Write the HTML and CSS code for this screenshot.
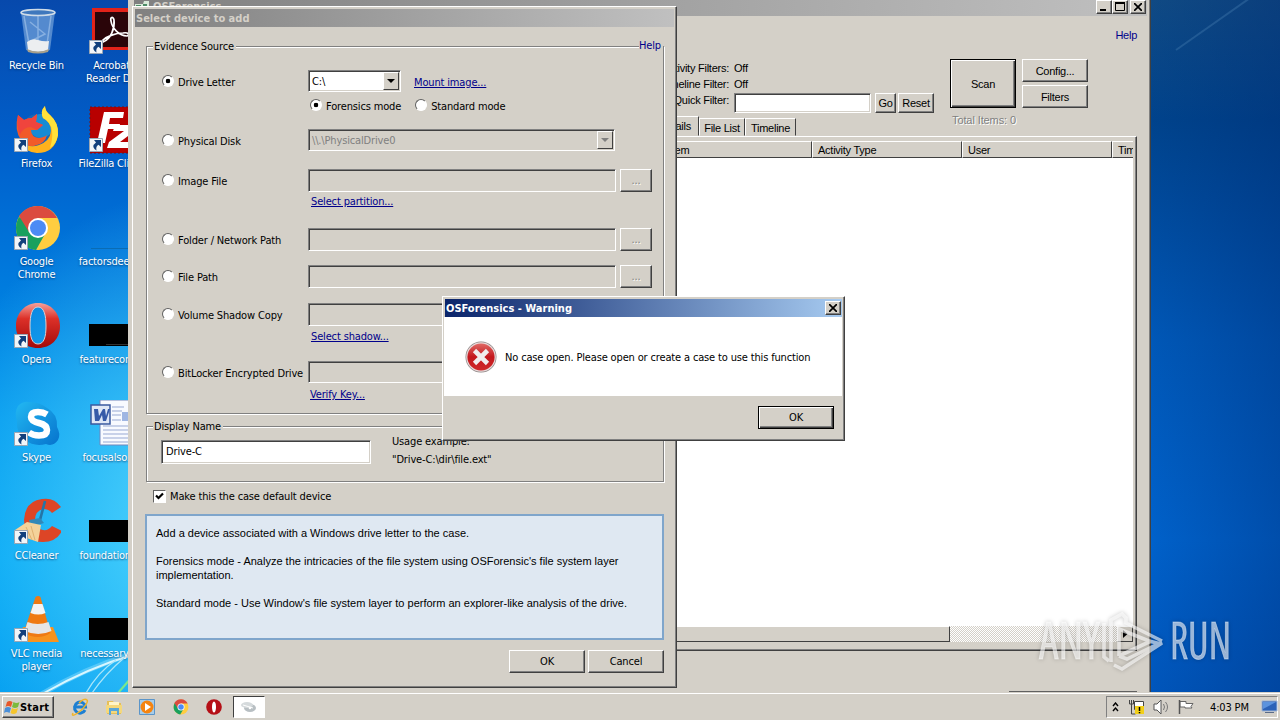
FILE: index.html
```html
<!DOCTYPE html>
<html lang="en">
<head>
    <meta charset="UTF-8">
    <title>OSForensics</title>
    <link rel="stylesheet" href="styles.css">
</head>
<body>
    <div class="desktop">
        <!-- Wallpaper light rays -->
        <svg class="rays" width="1280" height="720" viewBox="0 0 1280 720" fill="none">
            <defs>
                <g id="link">
                    <path d="M.5.5h13v13H.5z" fill="#f2f5f8" stroke="#9aa6b4"/>
                    <path d="M5 2h7v7L9.500 6.700Q6.500 8.500 7.500 12.500 1.500 8.500 7 4.500z" fill="#12407c"/>
                </g>
            </defs>
            <path d="M40 695 Q85 668 132 654" stroke="#9fe6ff" stroke-width="5" opacity=".4"/>
            <path d="M44 693 Q88 668 132 655" stroke="#d8f7ff" stroke-width="2"/>
            <path d="M86 693 Q98 672 116 660M92 693Q106 673 124 658" stroke="#a9e6fa" stroke-width="1.3"/>
            <path d="M118 693 L132 677" stroke="#7be88a" stroke-width="2"/>
            <path d="M1176 50 L1250 -2" stroke="#4d83b5" stroke-width="2" opacity=".35"/>
        </svg>

        <!-- Desktop icons -->
        <div class="icons">
            <div class="icon">
                <svg width="48" height="48" viewBox="0 0 48 48">
                    <path d="M8 4h34l-5 38q-12 5-24 0z" fill="#6f9fd8" opacity=".75"/>
                    <path d="M11 8l5 28M38 8l-4 28M25 8v26M17 14l15 12-16 8" stroke="#a9c8ec" stroke-width="1.5" fill="none" opacity=".6"/>
                    <path d="M14 34q5-4 11-2t11 1l-1 9q-10 4-20 0z" fill="#eceef0"/>
                    <path d="M14 41q11 5 22 0l-1 3q-10 3-20 0z" fill="#a7a08c"/>
                    <ellipse cx="25" cy="4.5" rx="17" ry="3" fill="#3f78bd" stroke="#cfdce8" stroke-width="1.6"/>
                </svg>
                <span>Recycle Bin</span>
            </div>
            <div class="icon">
                <svg width="48" height="48" viewBox="0 0 48 48">
                    <path d="M4 0h44v42H4z" fill="#e2231a"/>
                    <path d="M7 4h41v35H7z" fill="#2a0509"/>
                    <path d="M15 34c8-3 12-14 11-22-1-4-4-3-3 1 1 7 8 15 16 15 4-1 1-4-4-3-8 0-17 4-20 7q-2 4 0 2z" fill="none" stroke="#fff" stroke-width="1.7"/>
                </svg>
                <span>Acrobat<br>Reader DC</span>
                <svg class="shortcut"><use href="#link"/></svg>
            </div>
            <div class="icon">
                <svg width="48" height="48" viewBox="0 0 48 48">
                    <circle cx="25" cy="25" r="17" fill="#1667b8"/>
                    <circle cx="28" cy="20" r="12" fill="#168bd4"/>
                    <path d="M5 9l6 5q4-2 8-2l5-4-1 8 7 3-6 5h-6q0 7 8 8 6-1 8-3-2 8-10 10Q14 43 8 34 1 24 5 9z" fill="#f15a29"/>
                    <path d="M5 9l6 5q4-2 8-2l5-4-1 8 7 3-6 5-6-3q-8 0-11 8Q3 18 5 9z" fill="#f0443d"/>
                    <path d="M32 0q0 5 5 9 9 8 8 20-3 18-21 18Q11 46 7 35q9 8 19 4 11-4 12-14 0-9-8-13-3-7 2-12z" fill="#ffb21c"/>
                    <path d="M32 0q0 5 5 9 9 8 8 20-2 10-8 13 3-10 2-17-1-9-9-13-3-7 2-12z" fill="#ffe13a"/>
                </svg>
                <span>Firefox</span>
                <svg class="shortcut"><use href="#link"/></svg>
            </div>
            <div class="icon">
                <svg width="48" height="48" viewBox="0 0 48 48">
                    <path d="M2 1h46v46H2z" fill="#b80000" stroke="#7c1010" stroke-dasharray="2 2"/>
                    <path d="M16 6h20l-1 6H22l-1 6h11l-1 5H20l-3 14H9z" fill="#fff"/>
                    <path d="M27 19h21v5L32 36h16v6H19l2-6 15-11H25z" fill="#fff"/>
                </svg>
                <span>FileZilla Client</span>
                <svg class="shortcut"><use href="#link"/></svg>
            </div>
            <div class="icon">
                <svg width="48" height="48" viewBox="0 0 48 48">
                    <circle cx="25" cy="24" r="22" fill="#ffcd40"/>
                    <path d="M25 24L6 13A22 22 0 0 0 23 46l9-16z" fill="#18a05e"/>
                    <path d="M6 12A22 22 0 0 1 44 14H25l-9 14z" fill="#db4b3f"/>
                    <circle cx="25" cy="24" r="10" fill="#fff"/>
                    <circle cx="25" cy="24" r="8" fill="#4c8bf5"/>
                </svg>
                <span>Google<br>Chrome</span>
                <svg class="shortcut"><use href="#link"/></svg>
            </div>
            <div class="icon">
                <svg width="48" height="48" viewBox="0 0 48 48"><path d="M3 44.500h45" stroke="#0a6cb4"/></svg>
                <span>factorsdeep...</span>
            </div>
            <div class="icon">
                <svg width="48" height="48" viewBox="0 0 48 48">
                    <defs><linearGradient id="op" x1="0" y1="0" x2="0" y2="1"><stop offset="0" stop-color="#f4a09a"/><stop offset=".35" stop-color="#dc3028"/><stop offset="1" stop-color="#a30a0a"/></linearGradient></defs>
                    <path fill="url(#op)" fill-rule="evenodd" d="M25 1C38 1 47 11 47 24S38 46 25 46 3 37 3 24 12 1 25 1zM25 5C19 5 17 13 17 24s2 18 8 18 8-7 8-18S31 5 25 5z"/>
                    <path d="M25 5C19 5 17 13 17 24s2 18 8 18 8-7 8-18S31 5 25 5z" fill="none" stroke="#d9d0d4"/>
                </svg>
                <span>Opera</span>
                <svg class="shortcut"><use href="#link"/></svg>
            </div>
            <div class="icon">
                <svg width="48" height="48" viewBox="0 0 48 48"><path d="M1 22h47v22H1z"/><path d="M18 42.500h30" stroke="#333"/></svg>
                <span>featurecont...</span>
            </div>
            <div class="icon">
                <svg width="48" height="48" viewBox="0 0 48 48">
                    <defs><linearGradient id="sk" x1="0" y1="0" x2="1" y2="1"><stop offset="0" stop-color="#22b8f2"/><stop offset="1" stop-color="#0673cd"/></linearGradient></defs>
                    <path d="M16 2Q27 2 34 8 45 14 44 27 48 34 45 40 40 47 33 44 21 47 12 40 3 33 4 21 1 12 5 6 10 1 16 2z" fill="url(#sk)"/>
                    <path d="M34 14.500q-4-2.500-9-2.500-7 0-7 5 0 4 8 6t8 7q0 5.500-8 5.500-6 0-10-3" stroke="#fff" stroke-width="6.500" fill="none"/>
                </svg>
                <span>Skype</span>
                <svg class="shortcut"><use href="#link"/></svg>
            </div>
            <div class="icon">
                <svg width="48" height="48" viewBox="0 0 48 48">
                    <path d="M12 0h28l8 8v37H12z" fill="#f8faff" stroke="#7187bd"/>
                    <path d="M24 7h12M24 11h10M24 15h9M24 20h9M15 26h33M15 30h33M15 34h33M15 38h33M15 42h33" stroke="#98a9d3"/>
                    <path d="M34 12h14v9H34z" fill="#9fb6e3"/>
                    <path d="M3 5h19v19H3z" fill="#dfe7f6" stroke="#3a5aa0" stroke-width="1.5"/>
                    <path d="M6 9h4l1 7 4-7h2l1 7 2-7h2l-4 12h-3l-1-6-3 6H7z" fill="#365aa8"/>
                </svg>
                <span>focusalso.rtf</span>
            </div>
            <div class="icon">
                <svg width="48" height="48" viewBox="0 0 48 48">
                    <path d="M48 9Q41-1 29 1 12 3 11 22q1 22 19 22 13 0 19-11l-10-5q-4 5-9 4-8-1-8-10t8-11q6 0 9 4z" fill="#dd4526"/>
                    <path d="M32 3L27 22" stroke="#2475a6" stroke-width="2.600"/>
                    <path d="M16 22l11-2 4 5-13 4z" fill="#3288b8"/>
                    <path d="M14 24l14 3-3 17-17-6-6-6z" fill="#f4d29a"/>
                    <path d="M13 29l6 13M18 28l4 14" stroke="#e0b070"/>
                </svg>
                <span>CCleaner</span>
                <svg class="shortcut"><use href="#link"/></svg>
            </div>
            <div class="icon">
                <svg width="48" height="48" viewBox="0 0 48 48"><path d="M1 22h47v22H1z"/></svg>
                <span>foundationt...</span>
            </div>
            <div class="icon">
                <svg width="48" height="48" viewBox="0 0 48 48">
                    <path d="M10 31h30l6 15H4z" fill="#f7931e"/>
                    <path d="M22.500 1q2.500-2 5 0l10 36q-12 8-27 0z" fill="#ef7a12"/>
                    <path d="M20.500 8h9l3 9q-7 3-15 0z" fill="#f4f4f4"/>
                    <path d="M14.500 26q10 4 21 0l3 9q-13 6-27 0z" fill="#e6e6e6"/>
                </svg>
                <span>VLC media<br>player</span>
                <svg class="shortcut"><use href="#link"/></svg>
            </div>
            <div class="icon">
                <svg width="48" height="48" viewBox="0 0 48 48"><path d="M1 22h47v22H1z"/></svg>
                <span>necessaryc...</span>
            </div>
        </div>

        <!-- Main window -->
        <div class="window main-window">
            <div class="titlebar main-title">
                <svg width="15" height="12" viewBox="0 0 15 12"><path d="M0 3h8l1-3h5v9H0z" fill="#d9ead9"/><path d="M1 5h5M8 4h4" stroke="#4d8c66" stroke-width="2"/></svg>
                <span class="title-text">OSForensics</span>
                <div class="win-buttons">
                    <button class="win-btn"><svg width="10" height="9"><path d="M1 7h6v2H1z"/></svg></button>
                    <button class="win-btn"><svg width="10" height="9"><path d="M.5 1h9v7.500h-9z" fill="none" stroke="#000"/><path d="M0 0h10v2H0z"/></svg></button>
                    <button class="win-btn close"><svg width="8" height="8"><path d="M0 0l8 8M8 0L0 8" stroke="#000" stroke-width="1.700"/></svg></button>
                </div>
            </div>
            <div class="main-body">
                <a class="main-help">Help</a>
                <div class="toolbar">
                    <div class="filters">
                        <span class="name">Activity Filters:</span><span>Off</span>
                        <span class="name">Timeline Filter:</span><span>Off</span>
                        <span class="name">Quick Filter:</span>
                        <div class="quick">
                            <div class="field quick-field"></div>
                            <button class="btn go">Go</button>
                            <button class="btn reset">Reset</button>
                        </div>
                    </div>
                    <div class="scan-box">
                        <button class="btn default scan">Scan</button>
                        <span class="total">Total Items: 0</span>
                    </div>
                    <div class="side-buttons">
                        <button class="btn">Config...</button>
                        <button class="btn">Filters</button>
                    </div>
                </div>
                <div class="tabs">
                    <div class="tab active">Details</div>
                    <div class="tab">File List</div>
                    <div class="tab">Timeline</div>
                </div>
                <div class="tab-panel">
                    <div class="list">
                        <div class="list-head">
                            <span>Item</span><span>Activity Type</span><span>User</span><span>Time</span>
                        </div>
                        <div class="list-body"></div>
                        <div class="scrollbar">
                            <div class="thumb"></div>
                            <div class="arrow"><svg width="5" height="8"><path d="M0 0l4.500 4L0 8z"/></svg></div>
                        </div>
                    </div>
                </div>
                <div class="main-foot"></div>
            </div>
        </div>

        <!-- Select device dialog -->
        <div class="window device">
            <div class="titlebar">Select device to add</div>
            <a class="device-help">Help</a>
            <fieldset class="evidence">
                <legend>Evidence Source</legend>
                <div class="sources">
                    <label><i class="radio on"></i>Drive Letter</label>
                    <div class="drive">
                        <div class="field combo drive-combo">C:\<i class="drop"></i></div>
                        <a>Mount image...</a>
                    </div>
                    <div class="modes">
                        <label><i class="radio on"></i>Forensics mode</label>
                        <label><i class="radio"></i>Standard mode</label>
                    </div>
                    <label><i class="radio"></i>Physical Disk</label>
                    <div class="field combo off">\\.\PhysicalDrive0<i class="drop"></i></div>
                    <label class="row-image"><i class="radio"></i>Image File</label>
                    <div class="field off tall"></div>
                    <button class="btn browse">...</button>
                    <a class="sub">Select partition...</a>
                    <label><i class="radio"></i>Folder / Network Path</label>
                    <div class="field off tall"></div>
                    <button class="btn browse">...</button>
                    <label><i class="radio"></i>File Path</label>
                    <div class="field off tall"></div>
                    <button class="btn browse">...</button>
                    <label><i class="radio"></i>Volume Shadow Copy</label>
                    <div class="field off tall"></div>
                    <a class="sub">Select shadow...</a>
                    <label><i class="radio"></i>BitLocker Encrypted Drive</label>
                    <div class="field off"></div>
                    <a class="sub verify">Verify Key...</a>
                </div>
            </fieldset>
            <fieldset class="display">
                <legend>Display Name</legend>
                <div class="display-row">
                    <div class="field display-field">Drive-C</div>
                    <p>Usage example:<br>"Drive-C:\dir\file.ext"</p>
                </div>
            </fieldset>
            <label class="default-device">
                <i class="check"><svg width="9" height="9"><path d="M1 3.500l2.500 2.500L8 1.500" fill="none" stroke="#000" stroke-width="2.200"/></svg></i>
                Make this the case default device
            </label>
            <div class="info">
                <p>Add a device associated with a Windows drive letter to the case.</p>
                <p>Forensics mode - Analyze the intricacies of the file system using OSForensic's file system layer<br>implementation.</p>
                <p>Standard mode - Use Window's file system layer to perform an explorer-like analysis of the drive.</p>
            </div>
            <div class="device-buttons">
                <button class="btn">OK</button>
                <button class="btn">Cancel</button>
            </div>
        </div>

        <!-- Warning message -->
        <div class="window warning">
            <div class="titlebar blue">
                <span>OSForensics - Warning</span>
                <button class="win-btn"><svg width="8" height="8"><path d="M0 0l8 8M8 0L0 8" stroke="#000" stroke-width="1.700"/></svg></button>
            </div>
            <div class="warning-body">
                <svg width="32" height="32" viewBox="0 0 32 32">
                    <defs><linearGradient id="err" x1="0" y1="0" x2="0" y2="1"><stop offset="0" stop-color="#e06a66"/><stop offset=".5" stop-color="#c3161c"/><stop offset="1" stop-color="#cf2a2a"/></linearGradient></defs>
                    <circle cx="16" cy="16" r="15.500" fill="#8d8585"/>
                    <circle cx="16" cy="16" r="14.800" fill="#e9dada"/>
                    <circle cx="16" cy="16" r="13.600" fill="url(#err)"/>
                    <path d="M9.500 9.500l13 13M22.500 9.500l-13 13" stroke="#f0ecec" stroke-width="4.600"/>
                </svg>
                <span>No case open. Please open or create a case to use this function</span>
            </div>
            <div class="warning-foot"><button class="btn default">OK</button></div>
        </div>

        <!-- Taskbar -->
        <div class="taskbar">
            <button class="start">
                <svg width="16" height="15" viewBox="0 0 16 15"><path d="M3 2q2.500-2 5.500 0L7 7Q4 5 1.500 7z" fill="#e8582a"/><path d="M9.500 2q3 2 6 0l-1.500 5q-3 2-6 0z" fill="#7cba3d"/><path d="M1 8q3-2 6 0l-1.500 5q-3-2-5.500 0z" fill="#4a8fd8"/><path d="M8 8q3 2 6 0l-1.500 5q-3 2-6 0z" fill="#f5c52c"/></svg>
                Start
            </button>
            <div class="quick-launch">
                <svg width="18" height="18" viewBox="0 0 18 18">
                    <path d="M14 12A5.500 5.500 0 1 1 14.500 9H5" fill="none" stroke="#1c7fd2" stroke-width="3"/>
                    <path d="M2 15C0 19 4 17 8 14S18 4 16 2 11 2 8 5" fill="none" stroke="#f0b428" stroke-width="1.500"/>
                </svg>
                <svg width="18" height="18" viewBox="0 0 18 18">
                    <path d="M2 3h6l1 2h7v11H2z" fill="#e6bf58"/><path d="M4 4h10v6H4z" fill="#fff5c8"/><path d="M1 7h16v8H1z" fill="#f4d87c"/><path d="M4 10h10v7h-2v-4H6v4H4z" fill="#5aa6d8"/>
                </svg>
                <svg width="18" height="18" viewBox="0 0 18 18">
                    <path d="M1.500 1.500h15v15h-15z" fill="#a7cdea" stroke="#5b95c9"/><circle cx="9" cy="9" r="6.500" fill="#f58410"/><path d="M7 5l6 4-6 4z" fill="#fff"/>
                </svg>
                <svg width="18" height="18" viewBox="2 1 46 46">
                    <circle cx="25" cy="24" r="19" fill="#ffcd40"/><path d="M25 24L9 14A19 19 0 0 0 23 43l8-13z" fill="#18a05e"/><path d="M8 14a19 19 0 0 1 34 1H25l-8 13z" fill="#db4b3f"/><circle cx="25" cy="24" r="9" fill="#fff"/><circle cx="25" cy="24" r="7" fill="#4c8bf5"/>
                </svg>
                <svg width="18" height="18" viewBox="0 0 18 18">
                    <circle cx="9" cy="9" r="7.800" fill="#b50f16"/><ellipse cx="9" cy="9" rx="2" ry="5.500" fill="#fff"/>
                </svg>
            </div>
            <div class="task-active">
                <svg width="18" height="12" viewBox="0 0 18 12"><ellipse cx="10" cy="7" rx="6" ry="4" fill="#b8bfc3"/><ellipse cx="7" cy="4" rx="6" ry="3" fill="#d5dadc"/><path d="M3 4l10 3" stroke="#fff"/><circle cx="10" cy="7" r="1.300" fill="#fff"/></svg>
            </div>
            <div class="tray">
                <svg width="7" height="10" viewBox="0 0 7 10"><path d="M1 4l2.500-3L6 4M1 9l2.500-3L6 9" fill="none" stroke="#000" stroke-width="1.400"/></svg>
                <svg width="16" height="16" viewBox="0 0 16 16"><path d="M5.500 2.500h9v8h-9z" fill="#fff" stroke="#444"/><path d="M.5 1v4h4V1M2.500 1v14h4" fill="none" stroke="#444"/><path d="M6 7h9v8H6z" fill="#f2cf18"/><path d="M10.500 8v4M10.500 13v1.300" stroke="#000" stroke-width="1.500"/></svg>
                <svg width="17" height="16" viewBox="0 0 17 16"><path d="M1 5h3l4-4v14l-4-4H1z" fill="#fff" stroke="#555"/><path d="M10.500 5q2 3 0 6M12.500 3q4 5 0 10" fill="none" stroke="#777"/></svg>
                <svg width="17" height="16" viewBox="0 0 17 16"><path d="M2 2.500h6v2h7l-2 3 1 1.500H7V8H2z" fill="#fff" stroke="#666"/><path d="M1.500 1v14" stroke="#555" stroke-width="1.500"/></svg>
                <span class="clock">4:03 PM</span>
                <svg width="17" height="14" viewBox="0 0 17 14"><path d="M1 1h15v10H1z" fill="#2c62b8" stroke="#9fb4d4"/><path d="M2 2h13L2 9z" fill="#5c93de"/><path d="M4 12.500h9" stroke="#5a6b88"/></svg>
            </div>
        </div>

        <svg class="watermark" width="200" height="70" viewBox="0 0 200 70">
            <g class="mark-text">
                <text x="3" y="51" textLength="61" lengthAdjust="spacingAndGlyphs">ANY</text>
                <text x="134" y="51" textLength="61" lengthAdjust="spacingAndGlyphs">RUN</text>
            </g>
            <g fill="none" stroke="#fff" stroke-width="3.600" opacity=".6">
                <path d="M68 15v34l5 4"/>
                <path d="M75 54V12l11-6 4 4v5l36 18"/>
                <path d="M83 48V21l30 12 12 3"/>
                <path d="M83 48l32-15"/>
                <path d="M126 34L91 51l-8-3"/>
                <path d="M78 57l8 4 40-26"/>
            </g>
        </svg>
    </div>
</body>
</html>
```
FILE: styles.css
```css
* {
    box-sizing: border-box;
}

body {
    margin: 0;
    font-family: "DejaVu Sans Condensed", "DejaVu Sans", sans-serif;
    font-stretch: condensed;
    font-size: 11px;
    letter-spacing: -0.15px;
    color: #000;
}

p {
    margin: 0;
}

button {
    font: inherit;
    letter-spacing: inherit;
    color: inherit;
    padding: 0;
}

a {
    color: #00008b;
    text-decoration: underline;
}

svg {
    display: block;
    flex: none;
}

.desktop {
    position: relative;
    width: 1280px;
    height: 720px;
    overflow: hidden;
    background:
        radial-gradient(ellipse 260px 330px at 190px 520px, rgba(96, 222, 255, 0.85), rgba(40, 190, 250, 0) 100%),
        linear-gradient(90deg, transparent 1150px, rgba(0, 50, 120, 0.05) 1160px, rgba(0, 40, 110, 0.35) 1280px),
        linear-gradient(180deg, #0749ac 0, #0060cc 150px, #0078dc 270px, #0098ee 420px, #00a4f4 560px, #009cf0 692px) 0 0 / 640px 100% no-repeat,
        linear-gradient(180deg, #104a84 0, #00438c 120px, #004a9c 200px, #0058b8 340px, #0062cc 540px, #0056bc 692px);
}

.rays {
    position: absolute;
    left: 0;
    top: 0;
}

/* Desktop icons */
.icons {
    display: grid;
    grid-template-columns: 75px 75px;
    grid-auto-rows: 98px;
    padding-top: 8px;
    width: 150px;
}

.icon {
    position: relative;
    display: flex;
    flex-direction: column;
    align-items: center;
    width: 73px;
    color: #fff;
    line-height: 13px;
    text-align: center;
    white-space: nowrap;
    letter-spacing: -0.2px;
    text-shadow: 0 1px 2px rgba(0, 40, 90, 0.7);
}

.icon span {
    margin-top: 3px;
}

.shortcut {
    position: absolute;
    left: 14px;
    top: 32px;
    width: 14px;
    height: 14px;
}

/* Shared window parts */
.window {
    position: absolute;
    background: #d4d0c8;
    border: 1px solid;
    border-color: #fff #404040 #404040 #fff;
    box-shadow: inset -1px -1px 0 #808080;
}

.titlebar {
    display: flex;
    align-items: center;
    height: 18px;
    padding: 0 1px;
    background: linear-gradient(90deg, #808080, #c0c0c0);
    color: #d4d0c8;
    font-weight: bold;
    letter-spacing: 0;
}

.blue {
    justify-content: space-between;
    background: linear-gradient(90deg, #0a246a, #a6caf0);
    color: #fff;
}

.win-btn,
.btn,
.start {
    background: #d4d0c8;
    border: 1px solid;
    border-color: #fff #404040 #404040 #fff;
    box-shadow: inset -1px -1px 0 #808080;
}

.win-btn {
    display: flex;
    align-items: center;
    justify-content: center;
    width: 16px;
    height: 14px;
}

.btn {
    height: 23px;
}

.btn.default {
    border: 1px solid #000;
    box-shadow: inset 1px 1px 0 #fff, inset -1px -1px 0 #404040, inset -2px -2px 0 #808080;
}

.field {
    height: 22px;
    background: #fff;
    border: 1px solid;
    border-color: #808080 #fff #fff #808080;
    box-shadow: inset 1px 1px 0 #404040, inset -1px -1px 0 #d4d0c8;
}

.field.off {
    background: #d4d0c8;
    color: #808080;
}

.tall {
    height: 23px;
}

/* Main window */
.main-window {
    left: 128px;
    top: -6px;
    width: 1023px;
    height: 720px;
    font-family: "Liberation Sans", Arial, sans-serif;
    letter-spacing: -0.25px;
    border-left-color: #d4d0c8;
}

.main-title {
    height: 19px;
    margin: 2px 3px 0 5px;
    font-family: "DejaVu Sans Condensed", sans-serif;
    gap: 3px;
}

.title-text {
    flex: 1;
}

.win-buttons {
    display: flex;
}

.win-buttons .close {
    margin-left: 2px;
}

.main-body {
    padding: 12px 13px 0 184px;
}

.main-help {
    display: block;
    text-align: right;
    text-decoration: none;
    height: 31px;
    line-height: 14px;
}

.toolbar {
    display: flex;
    height: 70px;
}

.filters {
    display: grid;
    grid-template-columns: 417px auto;
    grid-template-rows: 16px 16px 24px;
    column-gap: 4px;
    width: 637px;
    padding-top: 2px;
    line-height: 14px;
}

.filters .name {
    text-align: right;
    padding-right: 1px;
}

.quick {
    display: flex;
    gap: 4px;
}

.quick-field {
    width: 137px;
    height: 20px;
}

.quick .btn {
    height: 20px;
}

.go {
    width: 21px;
}

.reset {
    width: 36px;
    margin-left: -2px;
}

.scan-box {
    width: 72px;
}

.scan {
    display: block;
    width: 66px;
    height: 49px;
}

.total {
    display: block;
    padding: 6px 0 0 2px;
    color: #808080;
    text-shadow: 1px 1px 0 #fff;
    white-space: nowrap;
    letter-spacing: -0.1px;
}

.side-buttons {
    display: flex;
    flex-direction: column;
    gap: 3px;
}

.side-buttons .btn {
    width: 66px;
}

.tabs {
    display: flex;
    align-items: flex-end;
    height: 20px;
    margin-top: -13px;
    padding-left: 338px;
}

.tab {
    width: 46px;
    height: 18px;
    padding-top: 3px;
    text-align: center;
    white-space: nowrap;
    border: 1px solid;
    border-color: #fff #404040 transparent #fff;
}

.tab:last-child {
    width: 51px;
}

.tab.active {
    width: 48px;
    height: 20px;
}

.tab-panel {
    height: 515px;
    padding: 4px 3px 8px 3px;
    border: 1px solid;
    border-color: #fff #404040 #404040 #fff;
    box-shadow: inset -1px -1px 0 #808080;
}

.list {
    display: flex;
    flex-direction: column;
    height: 501px;
}

.list-head {
    display: grid;
    grid-template-columns: 495px 150px 150px 23px;
    height: 17px;
    overflow: hidden;
}

.list-head span {
    padding: 2px 0 0 5px;
    overflow: hidden;
    border: 1px solid;
    border-color: #fff #404040 #404040 #fff;
}

.list-head span:first-child {
    padding-left: 351px;
}

.list-body {
    flex: 1;
    background: #fff;
}

.scrollbar {
    display: flex;
    justify-content: space-between;
    height: 16px;
    background: repeating-conic-gradient(#fff 0 25%, #d4d0c8 0 50%) 0 0 / 2px 2px;
}

.thumb {
    width: 633px;
    background: #d4d0c8;
    border: 1px solid;
    border-color: #fff #404040 #404040 #fff;
}

.arrow {
    display: flex;
    align-items: center;
    justify-content: center;
    width: 16px;
    background: #d4d0c8;
    border: 1px solid;
    border-color: #fff #404040 #404040 #fff;
}

.main-foot {
    height: 10px;
    width: 128px;
    margin: 40px 0 0 696px;
    border-top: 1px solid #606060;
}

/* Device dialog */
.device {
    left: 132px;
    top: 6px;
    width: 545px;
    height: 682px;
    padding: 2px 12px 0 13px;
}

.device .titlebar {
    margin: 0 -10px 0 -11px;
}

.device-help {
    position: absolute;
    right: 13px;
    top: 32px;
    padding-right: 2px;
    height: 14px;
    background: #d4d0c8;
    text-decoration: none;
}

fieldset {
    min-width: 0;
    margin: 0;
    padding: 0;
    border: 1px solid #808080;
    box-shadow: inset 1px 1px 0 #fff, 1px 1px 0 #fff;
}

legend {
    margin-left: 6px;
    padding: 0 2px 0 1px;
    height: 14px;
    line-height: 16px;
    background: #d4d0c8;
}

.evidence {
    height: 375px;
    margin-top: 12px;
}

.sources {
    display: grid;
    grid-template-columns: 147px 308px 32px;
    grid-template-rows: 29px 30px 40px 25px 34px 37px 38px 26px 32px 26px;
    align-items: start;
    column-gap: 0;
    padding: 17px 0 0 14px;
}

label {
    display: flex;
    align-items: center;
    height: 24px;
    white-space: nowrap;
}

.sources > label {
    grid-column: 1;
    padding-left: 1px;
}

.sources .field.off {
    width: 308px;
}

.sources .combo.off {
    width: 307px;
}

.radio {
    width: 12px;
    height: 12px;
    margin: 0 4px 3px 0;
    border: 1px solid;
    border-color: #606060 #fff #fff #606060;
    border-radius: 50%;
    background: #fff;
}

.radio.on {
    background: radial-gradient(circle at center, #000 2px, #fff 2.6px);
}

.drive {
    grid-column: 2 / 4;
    display: flex;
    align-items: center;
    gap: 13px;
}

.drive a {
    padding-top: 2px;
}

.drive-combo {
    width: 93px;
}

.combo {
    position: relative;
    padding-left: 3px;
    line-height: 21px;
}

.drop {
    position: absolute;
    right: 1px;
    top: 1px;
    width: 16px;
    height: 18px;
    background: #d4d0c8;
    border: 1px solid;
    border-color: #fff #404040 #404040 #fff;
}

.drop::after {
    content: "";
    position: absolute;
    left: 3px;
    top: 6px;
    border: 4px solid transparent;
    border-top-color: #000;
    border-bottom: 0;
}

.off .drop::after {
    border-top-color: #808080;
}

.modes {
    grid-column: 2 / 4;
    display: flex;
    gap: 14px;
    margin-top: -5px;
    padding-left: 2px;
}

.browse {
    width: 32px;
    margin-left: 4px;
    color: #808080;
    text-shadow: 1px 1px 0 #fff;
}

.sources .sub {
    grid-column: 2 / 4;
    line-height: 16px;
    justify-self: start;
    margin-left: 3px;
}

.sources .verify {
    margin-left: 2px;
}

.display {
    height: 63px;
    margin-top: 5px;
}

.display-row {
    display: flex;
    padding: 7px 0 0 14px;
}

.display-field {
    width: 210px;
    height: 24px;
    padding: 2px 0 0 4px;
    line-height: 17px;
}

.display-row p {
    margin: -7px 0 0 21px;
    line-height: 18px;
}

.default-device {
    margin-top: 2px;
    padding-left: 7px;
}

.check {
    display: flex;
    align-items: center;
    justify-content: center;
    width: 13px;
    height: 13px;
    margin-right: 4px;
    background: #fff;
    border: 1px solid;
    border-color: #606060 #fff #fff #606060;
}

.info {
    height: 126px;
    width: 519px;
    margin: 6px 0 0 -1px;
    padding: 10px 0 0 9px;
    background: #dfe8f2;
    border: 2px solid #7fa5cb;
    font-family: "Liberation Sans", Arial, sans-serif;
    line-height: 14px;
    letter-spacing: 0;
    white-space: nowrap;
}

.info p {
    margin-bottom: 14px;
}

.device-buttons {
    display: flex;
    justify-content: flex-end;
    gap: 3px;
    margin-top: 10px;
}

.device-buttons .btn {
    width: 76px;
}

/* Warning */
.warning {
    left: 442px;
    top: 296px;
    width: 403px;
    height: 145px;
    padding: 2px;
}

.warning-body {
    display: flex;
    align-items: center;
    height: 79px;
    margin-left: -1px;
    padding-left: 21px;
    gap: 8px;
    background: #fff;
    white-space: nowrap;
}

.warning-body span {
    padding-top: 2px;
}

.warning-foot {
    display: flex;
    justify-content: flex-end;
    padding: 10px 8px 0 0;
}

.warning-foot .btn {
    width: 76px;
}

/* Taskbar */
.taskbar {
    position: absolute;
    left: 0;
    right: 0;
    bottom: 0;
    display: flex;
    height: 28px;
    padding: 3px 2px 2px;
    background: #d4d0c8;
    box-shadow: inset 0 1px 0 #d4d0c8, inset 0 2px 0 #fff;
}

.start {
    display: flex;
    align-items: center;
    width: 52px;
    height: 22px;
    padding-left: 1px;
    margin-top: 1px;
    font-weight: bold;
    letter-spacing: 0.2px;
}

.quick-launch {
    display: flex;
    align-items: center;
    gap: 15.500px;
    margin-left: 17px;
}

.task-active {
    display: flex;
    align-items: center;
    justify-content: center;
    width: 32px;
    height: 22px;
    margin: 1px 0 0 10px;
    background: #fff;
    border: 1px solid;
    border-color: #404040 #fff #fff #404040;
}

.tray {
    display: flex;
    align-items: center;
    gap: 8px;
    width: 172px;
    height: 22px;
    margin: 1px 0 0 auto;
    padding-left: 5px;
    border: 1px solid;
    border-color: #808080 #fff #fff #808080;
}

.tray svg:first-child {
    margin-right: 2px;
}

.clock {
    width: 42px;
    margin: 0 4px 0 7px;
    white-space: nowrap;
}

.watermark {
    position: absolute;
    left: 1036px;
    top: 608px;
    overflow: visible;
    filter: drop-shadow(0 0 2px rgba(0, 0, 0, 0.35));
}

.mark-text {
    font-family: "Open Sans", sans-serif;
    font-size: 51px;
    fill: #fff;
    fill-opacity: 0.6;
    stroke: #fff;
    stroke-width: 0.8px;
    stroke-opacity: 0.4;
    letter-spacing: 0;
}
```
